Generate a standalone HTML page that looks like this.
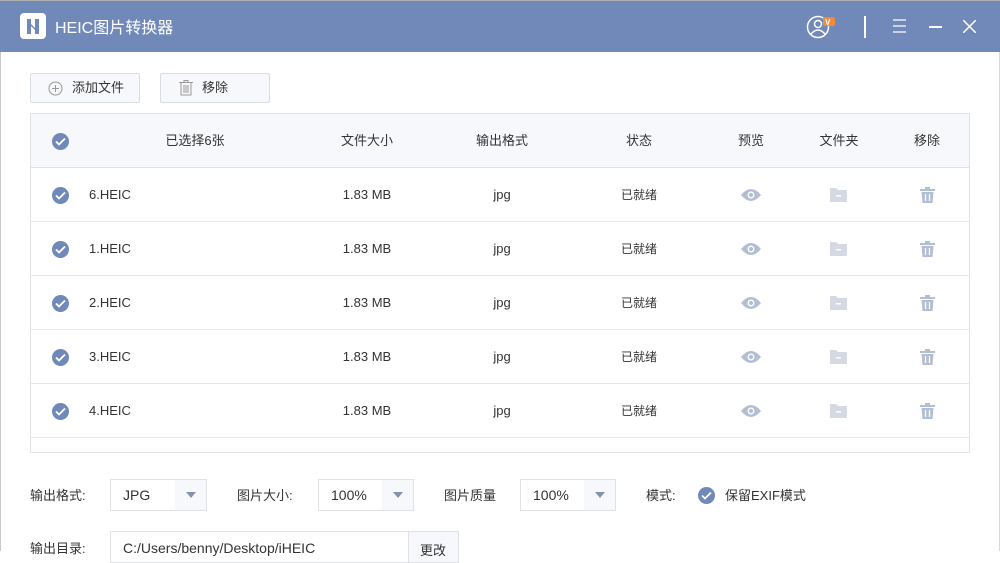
<!DOCTYPE html>
<html><head><meta charset="utf-8"><style>
*{box-sizing:border-box;margin:0;padding:0}
body{width:1000px;height:551px;overflow:hidden;background:#fff;font-family:"Liberation Sans","Noto Sans CJK SC",sans-serif;color:#333;font-size:13px;position:relative}
.title{position:absolute;left:0;top:0;width:1000px;height:52px;background:#7089b9;border-top:1px solid #b0b0b0}
.logo{position:absolute;left:20px;top:12px;width:26px;height:26px;background:#fff;border-radius:4px}
.ttl{position:absolute;left:55px;top:13px;color:#fff;font-size:16px}
.btn{position:absolute;top:73px;height:30px;border:1px solid #d8dce4;background:#f7f8fb;border-radius:2px;font-size:13px;line-height:28px}
.tbl{position:absolute;left:30px;top:113px;width:940px;height:340px;border:1px solid #e0e2e6}
.hdr{height:54px;background:#f7f8fb;border-bottom:1px solid #e0e2e6;position:relative}
.row{height:54px;border-bottom:1px solid #e4e6ea;position:relative}
.c{position:absolute;top:0;line-height:54px;transform:translateX(-50%);white-space:nowrap}
.chk{position:absolute;left:21px;top:19px;width:17px;height:17px;border-radius:50%;background:#7089b9}
.chk svg{position:absolute;left:3px;top:4px}
.lbl{position:absolute;top:485px;font-size:13px}
.sel{position:absolute;top:479px;height:32px;border:1px solid #e0e2e6;background:#fff}
.sel span{position:absolute;left:12px;top:7px;font-size:14px}
.sel i{position:absolute;right:0;top:0;width:31px;height:30px;background:#f7f8fb}
.sel i:after{content:"";position:absolute;left:11px;top:12px;border:5px solid transparent;border-top:6px solid #8592ac}
</style></head><body>
<div style="position:absolute;left:0;top:0;width:1px;height:551px;background:#c8c8c8"></div>
<div style="position:absolute;right:0;top:0;width:1px;height:551px;background:#d8d8d8"></div>
<div class="title">
<div class="logo"><svg width="26" height="26"><rect x="7" y="6" width="4" height="15" fill="#7089b9"/><rect x="15" y="6" width="4" height="15" fill="#7089b9"/><path d="M11 11 L15 15 L15 17 L11 13Z" fill="#7089b9"/></svg></div>
<div class="ttl">HEIC图片转换器</div>
<svg style="position:absolute;left:806px;top:14px" width="34" height="24"><circle cx="12" cy="12" r="10.5" fill="none" stroke="#fff" stroke-width="1.5"/><circle cx="12" cy="9" r="3.5" fill="none" stroke="#fff" stroke-width="1.5"/><path d="M5 19 Q12 11 19 19" fill="none" stroke="#fff" stroke-width="1.5"/><rect x="17" y="2" width="12" height="9" rx="2" fill="#f08a3c"/><text x="19" y="10" font-size="8" fill="#fff" font-weight="bold">V</text></svg>
<div style="position:absolute;left:864px;top:15px;width:2px;height:22px;background:#fff"></div>
<svg style="position:absolute;left:893px;top:18px" width="14" height="14"><path d="M0 1H13M0 7H13M0 13H13" stroke="#fff" stroke-width="1.3"/></svg>
<div style="position:absolute;left:929px;top:25px;width:13px;height:1.5px;background:#fff"></div>
<svg style="position:absolute;left:963px;top:19px" width="13" height="13"><path d="M0 0L13 13M13 0L0 13" stroke="#fff" stroke-width="1.5"/></svg>
</div>
<div class="btn" style="left:30px;width:110px"><svg style="position:absolute;left:17px;top:7px" width="15" height="15"><circle cx="7.5" cy="7.5" r="6.5" fill="none" stroke="#999" stroke-width="1"/><path d="M4 7.5H11M7.5 4V11" stroke="#999"/></svg><span style="position:absolute;left:41px">添加文件</span></div>
<div class="btn" style="left:160px;width:110px"><svg style="position:absolute;left:18px;top:6px" width="14" height="16"><path d="M0 2.5H14M5 2.5V0.5H9V2.5M2 2.5V15H12V2.5M5 5V13M7 5V13M9 5V13" fill="none" stroke="#999"/></svg><span style="position:absolute;left:41px">移除</span></div>
<div class="tbl">
<div class="hdr"><div class="chk"><svg width="11" height="9"><path d="M1 4.5L4 7.5L10 1.5" fill="none" stroke="#fff" stroke-width="1.8"/></svg></div>
<div class="c" style="left:164px">已选择6张</div><div class="c" style="left:336px">文件大小</div><div class="c" style="left:471px">输出格式</div><div class="c" style="left:608px">状态</div><div class="c" style="left:720px">预览</div><div class="c" style="left:808px">文件夹</div><div class="c" style="left:896px">移除</div></div>
<div class="row"><div class="chk"><svg width="11" height="9"><path d="M1 4.5L4 7.5L10 1.5" fill="none" stroke="#fff" stroke-width="1.8"/></svg></div><div class="c" style="left:58px;transform:none">6.HEIC</div><div class="c" style="left:336px">1.83 MB</div><div class="c" style="left:471px">jpg</div><div class="c" style="left:608px;font-size:12px">已就绪</div><svg style="position:absolute;left:710px;top:20px" width="20" height="14"><path d="M0 7Q10 -5 20 7Q10 19 0 7Z" fill="#b3bdd4"/><circle cx="10" cy="7" r="3.5" fill="#fff"/><circle cx="10" cy="7" r="2" fill="#b3bdd4"/></svg><svg style="position:absolute;left:799px;top:20px" width="17" height="14"><path d="M0 0H6L8 2H17V14H0Z" fill="#d4d9e4"/><rect x="6" y="7" width="5" height="1.5" fill="#fff"/></svg><svg style="position:absolute;left:889px;top:19px" width="15" height="16"><path d="M0 2H15V4H0ZM5 0H10V2H5ZM1.5 5H13.5L12.5 16H2.5Z" fill="#b3bdd4"/><path d="M5.5 7V14M9.5 7V14" stroke="#fff" stroke-width="1.3"/></svg></div>
<div class="row"><div class="chk"><svg width="11" height="9"><path d="M1 4.5L4 7.5L10 1.5" fill="none" stroke="#fff" stroke-width="1.8"/></svg></div><div class="c" style="left:58px;transform:none">1.HEIC</div><div class="c" style="left:336px">1.83 MB</div><div class="c" style="left:471px">jpg</div><div class="c" style="left:608px;font-size:12px">已就绪</div><svg style="position:absolute;left:710px;top:20px" width="20" height="14"><path d="M0 7Q10 -5 20 7Q10 19 0 7Z" fill="#b3bdd4"/><circle cx="10" cy="7" r="3.5" fill="#fff"/><circle cx="10" cy="7" r="2" fill="#b3bdd4"/></svg><svg style="position:absolute;left:799px;top:20px" width="17" height="14"><path d="M0 0H6L8 2H17V14H0Z" fill="#d4d9e4"/><rect x="6" y="7" width="5" height="1.5" fill="#fff"/></svg><svg style="position:absolute;left:889px;top:19px" width="15" height="16"><path d="M0 2H15V4H0ZM5 0H10V2H5ZM1.5 5H13.5L12.5 16H2.5Z" fill="#b3bdd4"/><path d="M5.5 7V14M9.5 7V14" stroke="#fff" stroke-width="1.3"/></svg></div>
<div class="row"><div class="chk"><svg width="11" height="9"><path d="M1 4.5L4 7.5L10 1.5" fill="none" stroke="#fff" stroke-width="1.8"/></svg></div><div class="c" style="left:58px;transform:none">2.HEIC</div><div class="c" style="left:336px">1.83 MB</div><div class="c" style="left:471px">jpg</div><div class="c" style="left:608px;font-size:12px">已就绪</div><svg style="position:absolute;left:710px;top:20px" width="20" height="14"><path d="M0 7Q10 -5 20 7Q10 19 0 7Z" fill="#b3bdd4"/><circle cx="10" cy="7" r="3.5" fill="#fff"/><circle cx="10" cy="7" r="2" fill="#b3bdd4"/></svg><svg style="position:absolute;left:799px;top:20px" width="17" height="14"><path d="M0 0H6L8 2H17V14H0Z" fill="#d4d9e4"/><rect x="6" y="7" width="5" height="1.5" fill="#fff"/></svg><svg style="position:absolute;left:889px;top:19px" width="15" height="16"><path d="M0 2H15V4H0ZM5 0H10V2H5ZM1.5 5H13.5L12.5 16H2.5Z" fill="#b3bdd4"/><path d="M5.5 7V14M9.5 7V14" stroke="#fff" stroke-width="1.3"/></svg></div>
<div class="row"><div class="chk"><svg width="11" height="9"><path d="M1 4.5L4 7.5L10 1.5" fill="none" stroke="#fff" stroke-width="1.8"/></svg></div><div class="c" style="left:58px;transform:none">3.HEIC</div><div class="c" style="left:336px">1.83 MB</div><div class="c" style="left:471px">jpg</div><div class="c" style="left:608px;font-size:12px">已就绪</div><svg style="position:absolute;left:710px;top:20px" width="20" height="14"><path d="M0 7Q10 -5 20 7Q10 19 0 7Z" fill="#b3bdd4"/><circle cx="10" cy="7" r="3.5" fill="#fff"/><circle cx="10" cy="7" r="2" fill="#b3bdd4"/></svg><svg style="position:absolute;left:799px;top:20px" width="17" height="14"><path d="M0 0H6L8 2H17V14H0Z" fill="#d4d9e4"/><rect x="6" y="7" width="5" height="1.5" fill="#fff"/></svg><svg style="position:absolute;left:889px;top:19px" width="15" height="16"><path d="M0 2H15V4H0ZM5 0H10V2H5ZM1.5 5H13.5L12.5 16H2.5Z" fill="#b3bdd4"/><path d="M5.5 7V14M9.5 7V14" stroke="#fff" stroke-width="1.3"/></svg></div>
<div class="row"><div class="chk"><svg width="11" height="9"><path d="M1 4.5L4 7.5L10 1.5" fill="none" stroke="#fff" stroke-width="1.8"/></svg></div><div class="c" style="left:58px;transform:none">4.HEIC</div><div class="c" style="left:336px">1.83 MB</div><div class="c" style="left:471px">jpg</div><div class="c" style="left:608px;font-size:12px">已就绪</div><svg style="position:absolute;left:710px;top:20px" width="20" height="14"><path d="M0 7Q10 -5 20 7Q10 19 0 7Z" fill="#b3bdd4"/><circle cx="10" cy="7" r="3.5" fill="#fff"/><circle cx="10" cy="7" r="2" fill="#b3bdd4"/></svg><svg style="position:absolute;left:799px;top:20px" width="17" height="14"><path d="M0 0H6L8 2H17V14H0Z" fill="#d4d9e4"/><rect x="6" y="7" width="5" height="1.5" fill="#fff"/></svg><svg style="position:absolute;left:889px;top:19px" width="15" height="16"><path d="M0 2H15V4H0ZM5 0H10V2H5ZM1.5 5H13.5L12.5 16H2.5Z" fill="#b3bdd4"/><path d="M5.5 7V14M9.5 7V14" stroke="#fff" stroke-width="1.3"/></svg></div>
</div>
<div class="lbl" style="left:30px">输出格式:</div>
<div class="sel" style="left:110px;width:97px"><span>JPG</span><i></i></div>
<div class="lbl" style="left:237px">图片大小:</div>
<div class="sel" style="left:318px;width:96px"><span>100%</span><i></i></div>
<div class="lbl" style="left:444px">图片质量</div>
<div class="sel" style="left:520px;width:96px"><span>100%</span><i></i></div>
<div class="lbl" style="left:646px">模式:</div>
<div class="chk" style="left:698px;top:487px"><svg width="11" height="9"><path d="M1 4.5L4 7.5L10 1.5" fill="none" stroke="#fff" stroke-width="1.8"/></svg></div>
<div class="lbl" style="left:725px">保留EXIF模式</div>
<div class="lbl" style="left:30px;top:538px">输出目录:</div>
<div class="sel" style="left:110px;top:531px;width:299px;height:32px"><span style="top:8px">C:/Users/benny/Desktop/iHEIC</span></div>
<div class="sel" style="left:408px;top:531px;width:51px;height:32px;background:#f7f8fb"><span style="top:8px;left:11px;font-size:13px">更改</span></div>
</body></html>
